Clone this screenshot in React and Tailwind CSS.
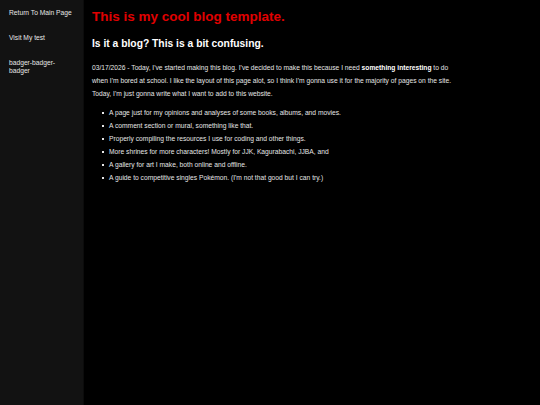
const items = [
  'A page just for my opinions and analyses of some books, albums, and movies.',
  'A comment section or mural, something like that.',
  'Properly compiling the resources I use for coding and other things.',
  'More shrines for more characters! Mostly for JJK, Kagurabachi, JJBA, and',
  'A gallery for art I make, both online and offline.',
  'A guide to competitive singles Pokémon. (I\'m not that good but I can try.)',
];

export default function App() {
  return (
    <div className="flex min-h-[405px] bg-black font-['Liberation_Sans',Arial,sans-serif] text-[#e6e6e6] antialiased">
      <nav className="w-[84px] shrink-0 bg-[#121212] border-r border-[#0c0c0c] px-[9px] pt-[9px] text-[6.7px] leading-[8px]">
        <a href="#" className="block whitespace-nowrap">Return To Main Page</a>
        <a href="#" className="block mt-[17px]">Visit My test</a>
        <a href="#" className="block mt-[17px] w-[52px]">badger-badger-badger</a>
      </nav>
      <main className="flex-1 pl-[8px] pt-[8px]">
        <h1 className="text-[13.5px] leading-[17px] font-bold text-[#e00000]">This is my cool blog template.</h1>
        <h2 className="mt-[12px] text-[10.3px] leading-[14px] font-bold text-white">Is it a blog? This is a bit confusing.</h2>
        <div className="max-w-[366px]">
          <p className="mt-[10px] text-[6.7px] leading-[13px]">
            03/17/2026 - Today, I've started making this blog. I've decided to make this because I need <b className="text-white">something interesting</b> to do when I'm bored at school. I like the layout of this page alot, so I think I'm gonna use it for the majority of pages on the site. Today, I'm just gonna write what I want to add to this website.
          </p>
          <ul className="mt-[6px] pl-[10px] text-[6.7px] leading-[13px]">
            {items.map((t, i) => (
              <li key={i} className="flex items-center gap-[5px]">
                <span className="w-[2px] h-[2px] bg-[#e6e6e6] shrink-0" />
                <span>{t}</span>
              </li>
            ))}
          </ul>
        </div>
      </main>
    </div>
  );
}
